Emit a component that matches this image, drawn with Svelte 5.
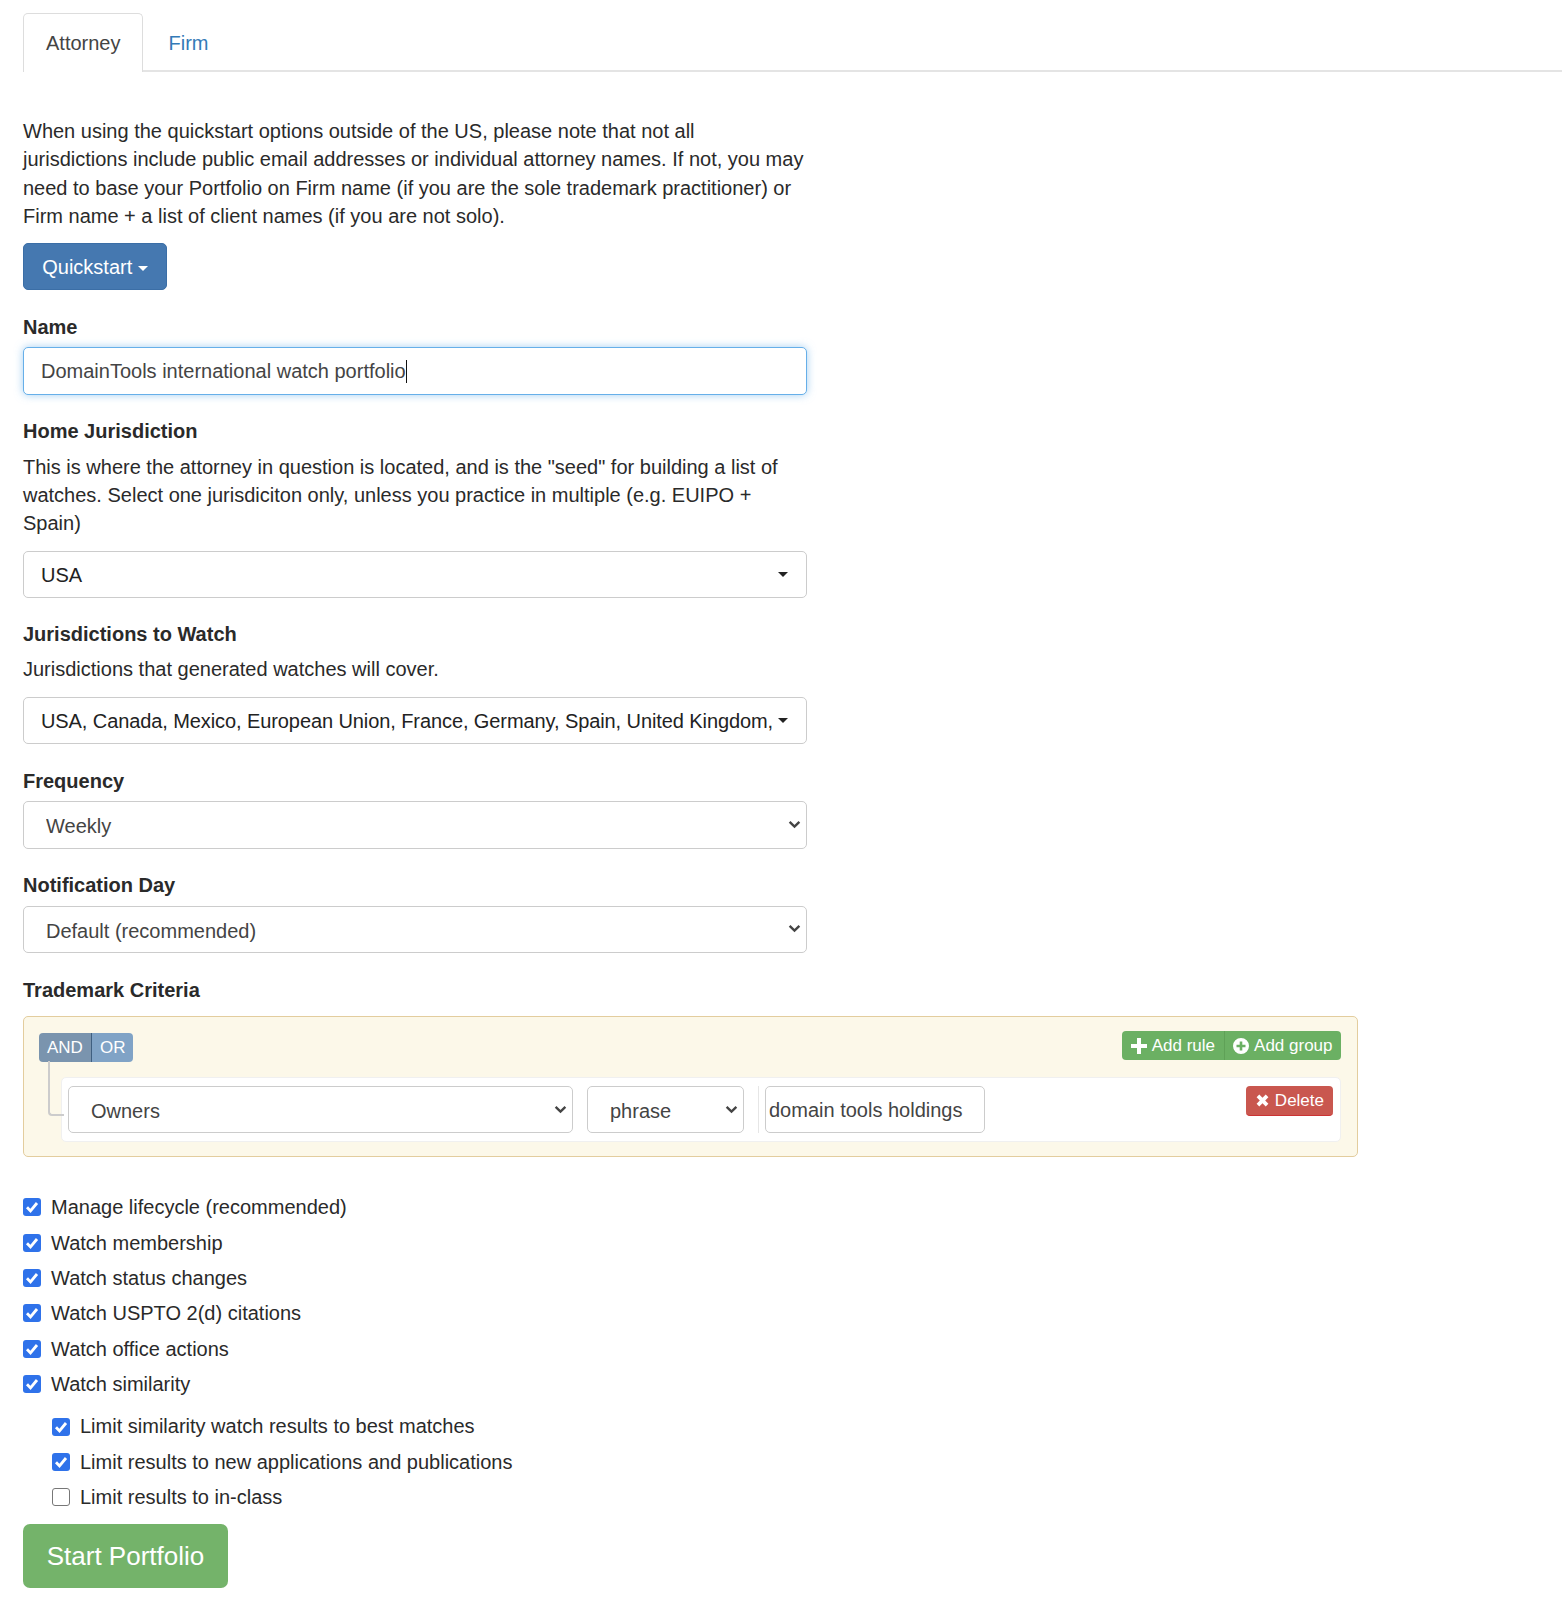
<script>
  const mainChecks = [
    { text: 'Manage lifecycle (recommended)', on: true },
    { text: 'Watch membership', on: true },
    { text: 'Watch status changes', on: true },
    { text: 'Watch USPTO 2(d) citations', on: true },
    { text: 'Watch office actions', on: true },
    { text: 'Watch similarity', on: true }
  ]
  const subChecks = [
    { text: 'Limit similarity watch results to best matches', on: true },
    { text: 'Limit results to new applications and publications', on: true },
    { text: 'Limit results to in-class', on: false }
  ]
</script>

{#snippet check(item)}
  <label class="check">
    <span class="box" class:on={item.on}>
      {#if item.on}
        <svg viewBox="0 0 18 18" width="18" height="18"><path d="M4 9.300l3.500 3.700 6.500-8" fill="none" stroke="#fff" stroke-width="2.800"/></svg>
      {/if}
    </span>
    <span>{item.text}</span>
  </label>
{/snippet}

{#snippet chevron()}
  <svg class="chev" viewBox="0 0 12 8" width="13" height="9"><path d="M1.500 1.500L6 6l4.500-4.500" fill="none" stroke="#444" stroke-width="2.200"/></svg>
{/snippet}

<div class="page">
  <ul class="tabs">
    <li class="tab active">Attorney</li>
    <li class="tab">Firm</li>
  </ul>

  <p class="intro">When using the quickstart options outside of the US, please note that not all<br>jurisdictions include public email addresses or individual attorney names. If not, you may<br>need to base your Portfolio on Firm name (if you are the sole trademark practitioner) or<br>Firm name + a list of client names (if you are not solo).</p>

  <button class="btn-quick">Quickstart <span class="caret"></span></button>

  <div class="field name-field">
    <div class="label">Name</div>
    <div class="control focus">DomainTools international watch portfolio<span class="cursor"></span></div>
  </div>

  <div class="field">
    <div class="label">Home Jurisdiction</div>
    <p class="help">This is where the attorney in question is located, and is the "seed" for building a list of watches. Select one jurisdiciton only, unless you practice in multiple (e.g. EUIPO + Spain)</p>
    <div class="control picker"><span class="picker-text">USA</span><span class="caret dark"></span></div>
  </div>

  <div class="field jur-field">
    <div class="label">Jurisdictions to Watch</div>
    <p class="help short">Jurisdictions that generated watches will cover.</p>
    <div class="control picker"><span class="picker-text tight">USA, Canada, Mexico, European Union, France, Germany, Spain, United Kingdom,</span><span class="caret dark"></span></div>
  </div>

  <div class="field freq-field">
    <div class="label">Frequency</div>
    <div class="select-wrap">
      <select class="control native"><option>Weekly</option></select>
      {@render chevron()}
    </div>
  </div>

  <div class="field day-field">
    <div class="label">Notification Day</div>
    <div class="select-wrap">
      <select class="control native"><option>Default (recommended)</option></select>
      {@render chevron()}
    </div>
  </div>

  <div class="label">Trademark Criteria</div>
  <div class="builder">
    <div class="builder-head">
      <div class="btn-group logic-group">
        <span class="andor and">AND</span><span class="andor or">OR</span>
      </div>
      <div class="btn-group add-group">
        <span class="add first">
          <svg viewBox="0 0 16 16" width="16" height="16"><path d="M6 0h4v6h6v4h-6v6H6v-6H0V6h6z" fill="#fff"/></svg>
          Add rule
        </span><span class="add">
          <svg viewBox="0 0 16 16" width="16" height="16"><path fill-rule="evenodd" d="M8 0a8 8 0 1 1 0 16A8 8 0 0 1 8 0zM6.700 3.500v3.200H3.500v2.600h3.200v3.200h2.600V9.300h3.200V6.700H9.300V3.500z" fill="#fff"/></svg>
          Add group
        </span>
      </div>
    </div>
    <div class="rule-area">
      <div class="connector"></div>
      <div class="rule">
        <div class="select-wrap owners">
          <select class="control native"><option>Owners</option></select>
          {@render chevron()}
        </div>
        <div class="select-wrap phrase">
          <select class="control native"><option>phrase</option></select>
          {@render chevron()}
        </div>
        <div class="sep"></div>
        <input class="control value" value="domain tools holdings" />
        <span class="delete">
          <svg viewBox="0 0 14 14" width="15" height="15"><path d="M1.500 4L4 1.500 7 4.500 10 1.500 12.500 4 9.500 7 12.500 10 10 12.500 7 9.500 4 12.500 1.500 10 4.500 7z" fill="#fff"/></svg>
          Delete
        </span>
      </div>
    </div>
  </div>

  <div class="checks">
    {#each mainChecks as item}
      {@render check(item)}
    {/each}
  </div>
  <div class="checks sub">
    {#each subChecks as item}
      {@render check(item)}
    {/each}
  </div>

  <button class="btn-start">Start Portfolio</button>
</div>

<style>
  :global(body) { background: #fff; }
  .page {
    padding: 13px 0 12px 23px;
    font-family: "Liberation Sans", Arial, sans-serif;
    font-size: 20px;
    line-height: 28.3px;
    color: #2a2a2a;
    box-sizing: border-box;
    height: 1600px;
  }
  .tabs { list-style: none; display: flex; margin: 0; padding: 0; border-bottom: 2px solid #e4e4e4; height: 57px; }
  .tab { padding: 16px 22px 0; color: #337ab7; margin-bottom: -2px; box-sizing: border-box; height: 59px; margin-left: 3px; }
  .tab.active { color: #444; background: #fff; border: 1px solid #ddd; border-bottom: 0; border-radius: 5px 5px 0 0; padding-top: 15px; margin-left: 0; }

  .intro { margin: 45px 0 13px; width: 790px; }
  .help { margin: 7px 0 13px; width: 784px; }
  .help.short { margin: 7px 0 14px; }

  .btn-quick {
    display: block; font: inherit; color: #fff; background: #4578b0;
    border: 1px solid #3b6ea6; border-radius: 5px; height: 47px; width: 144px; padding: 0; margin-bottom: 23px;
  }
  .caret { display: inline-block; width: 0; height: 0; vertical-align: middle; border-top: 5px solid #fff; border-left: 5px solid transparent; border-right: 5px solid transparent; }
  .caret.dark { border-top-color: #222; flex: none; }

  .label { font-weight: 700; margin-bottom: 6px; }
  .field { margin-bottom: 22px; width: 784px; }
  .jur-field { margin-bottom: 23px; }
  .freq-field .label { margin-bottom: 5px; }
  .freq-field .control { height: 48px; }
  .day-field { margin-bottom: 23px; }
  .day-field .label { margin-bottom: 7px; }

  .control {
    display: block; box-sizing: border-box; width: 100%; height: 47px; font: inherit;
    color: #444; background: #fff; border: 1px solid #ccc; border-radius: 5px; padding: 0 17px;
    line-height: 45px;
  }
  .control.focus { height: 48px; border-color: #66afe9; box-shadow: 0 0 9px rgba(102, 175, 233, .6); line-height: 46px; }
  .cursor { display: inline-block; width: 1px; height: 23px; background: #111; vertical-align: -5px; }
  .picker { display: flex; align-items: center; gap: 4px; color: #222; padding-right: 18px; justify-content: space-between; }
  .picker-text { white-space: nowrap; flex: 1; padding-top: 2px; }
  .picker-text.tight { letter-spacing: -0.09px; }

  .select-wrap { position: relative; }
  .native { appearance: none; padding: 2px 22px 0; }
  .chev { position: absolute; right: 6px; top: 50%; margin-top: -5px; pointer-events: none; }

  .builder { width: 1335px; box-sizing: border-box; height: 141px; margin-top: 12px; padding: 16px 16px 0; background: #fcf8e9; border: 1px solid #e3cd9e; border-radius: 5px; }
  .builder-head { display: flex; justify-content: space-between; align-items: flex-start; height: 44px; }
  .btn-group { display: flex; border-radius: 4px; overflow: hidden; }
  .logic-group { margin-left: -1px; }
  .add-group { margin-top: -2px; }
  .andor { color: #fff; height: 29px; line-height: 29px; padding: 0 8px; font-size: 17px; }
  .and { background: #7a94ae; border-right: 1px solid #3f5f80; }
  .or { background: #80a3c6; }
  .add { display: flex; align-items: center; gap: 5px; color: #fff; background: #6bb063; height: 29px; padding: 0 8.500px; font-size: 17px; }
  .add.first { border-right: 1px solid #5fa157; }

  .rule-area { position: relative; padding-left: 21px; }
  .connector { position: absolute; left: 8px; top: -16px; width: 14px; height: 53px; border: 2px solid #ccc; border-top: 0; border-right: 0; border-radius: 0 0 0 4px; }
  .rule { display: flex; align-items: flex-start; height: 65px; box-sizing: border-box; padding: 8px 7px 8px 6px; background: #fff; border: 1px solid #f0f0f0; border-radius: 5px; }
  .owners { width: 505px; margin-right: 14px; }
  .phrase { width: 157px; margin-right: 14px; }
  .sep { width: 1px; height: 47px; background: #e6e6e6; margin-right: 6px; }
  .value { width: 220px; padding: 2px 3px 0; }
  .delete { margin-left: auto; display: flex; align-items: center; gap: 5px; color: #fff; background: #c9574f; border-bottom: 1px solid #c33; border-radius: 4px; height: 29px; padding: 0 9px; font-size: 17px; }

  .checks { display: flex; flex-direction: column; margin-top: 36px; gap: 7.1px; }
  .checks.sub { margin-top: 14px; margin-left: 29px; }
  .check { display: flex; align-items: center; gap: 10px; }
  .box { width: 18px; height: 18px; box-sizing: border-box; border-radius: 3px; border: 1px solid #777; background: #fff; display: block; }
  .box.on { background: #2f72ea; border: 0; }
  .box svg { display: block; }

  .btn-start { display: block; margin-top: 13px; width: 205px; height: 64px; border: 0; border-radius: 7px; background: #74b36a; color: #fff; font: inherit; font-size: 26px; }
</style>
